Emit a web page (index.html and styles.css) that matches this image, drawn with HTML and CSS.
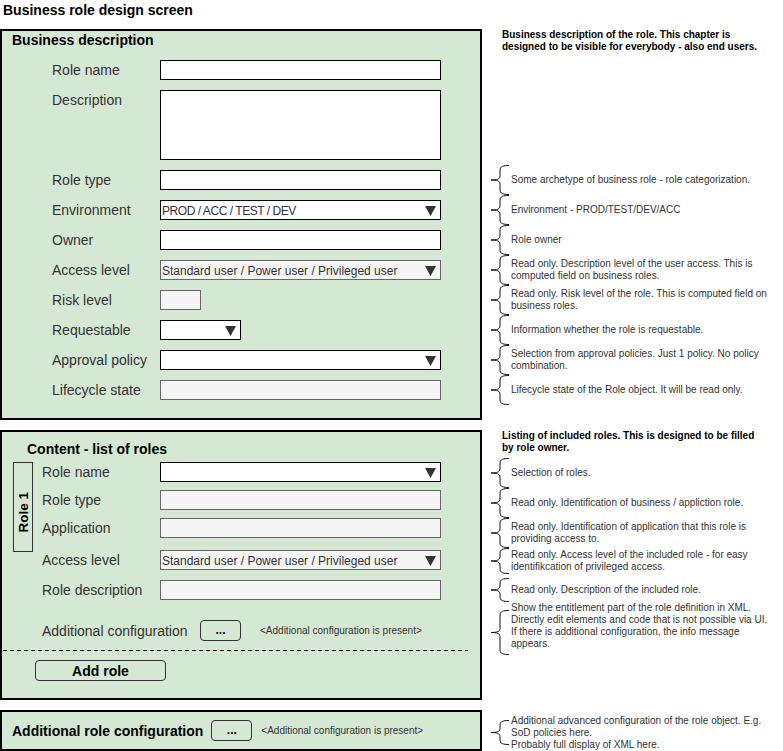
FILE: index.html
```html
<!DOCTYPE html>
<html lang="en">
<head>
<meta charset="utf-8">
<title>Business role design screen</title>
<link rel="stylesheet" href="styles.css">
</head>
<body>
<div class="page">
  <h1 class="title">Business role design screen</h1>

  <section class="panel panel-business">
    <h2 class="panel-title">Business description</h2>
    <div class="form">
      <div class="row"><span class="label">Role name</span><span class="field"></span></div>
      <div class="row"><span class="label">Description</span><span class="field field-tall"></span></div>
      <div class="row"><span class="label">Role type</span><span class="field"></span></div>
      <div class="row"><span class="label">Environment</span><span class="field select"><span class="value value-caps">PROD / ACC / TEST / DEV</span><svg class="caret" width="11" height="10" viewBox="0 0 11 10"><path d="M0 0H11L5.5 10Z"/></svg></span></div>
      <div class="row"><span class="label">Owner</span><span class="field"></span></div>
      <div class="row"><span class="label">Access level</span><span class="field select readonly"><span class="value">Standard user / Power user / Privileged user</span><svg class="caret" width="11" height="10" viewBox="0 0 11 10"><path d="M0 0H11L5.5 10Z"/></svg></span></div>
      <div class="row"><span class="label">Risk level</span><span class="field readonly field-xs"></span></div>
      <div class="row"><span class="label">Requestable</span><span class="field select field-sm"><svg class="caret" width="11" height="10" viewBox="0 0 11 10"><path d="M0 0H11L5.5 10Z"/></svg></span></div>
      <div class="row"><span class="label">Approval policy</span><span class="field select"><svg class="caret" width="11" height="10" viewBox="0 0 11 10"><path d="M0 0H11L5.5 10Z"/></svg></span></div>
      <div class="row"><span class="label">Lifecycle state</span><span class="field readonly"></span></div>
    </div>
  </section>

  <aside class="notes notes-business">
    <p class="note-lead">Business description of the role. This chapter is<br>designed to be visible for everybody - also end users.</p>
    <ul class="braces">
      <li class="brace-item h30"><svg class="brace" width="20" height="30" viewBox="0 0 20 30"><path d="M19 .5C13 .5 10 1.5 10 5V11C10 14 7 15 1 15C7 15 10 16 10 19V25C10 28.5 13 29.5 19 29.5"/></svg><span class="note">Some archetype of business role - role categorization.</span></li>
      <li class="brace-item h30"><svg class="brace" width="20" height="30" viewBox="0 0 20 30"><path d="M19 .5C13 .5 10 1.5 10 5V11C10 14 7 15 1 15C7 15 10 16 10 19V25C10 28.5 13 29.5 19 29.5"/></svg><span class="note">Environment - PROD/TEST/DEV/ACC</span></li>
      <li class="brace-item h30"><svg class="brace" width="20" height="30" viewBox="0 0 20 30"><path d="M19 .5C13 .5 10 1.5 10 5V11C10 14 7 15 1 15C7 15 10 16 10 19V25C10 28.5 13 29.5 19 29.5"/></svg><span class="note">Role owner</span></li>
      <li class="brace-item h30"><svg class="brace" width="20" height="30" viewBox="0 0 20 30"><path d="M19 .5C13 .5 10 1.5 10 5V11C10 14 7 15 1 15C7 15 10 16 10 19V25C10 28.5 13 29.5 19 29.5"/></svg><span class="note">Read only. Description level of the user access. This is<br>computed field on business roles.</span></li>
      <li class="brace-item h30"><svg class="brace" width="20" height="30" viewBox="0 0 20 30"><path d="M19 .5C13 .5 10 1.5 10 5V11C10 14 7 15 1 15C7 15 10 16 10 19V25C10 28.5 13 29.5 19 29.5"/></svg><span class="note">Read only. Risk level of the role. This is computed field on<br>business roles.</span></li>
      <li class="brace-item h30"><svg class="brace" width="20" height="30" viewBox="0 0 20 30"><path d="M19 .5C13 .5 10 1.5 10 5V11C10 14 7 15 1 15C7 15 10 16 10 19V25C10 28.5 13 29.5 19 29.5"/></svg><span class="note">Information whether the role is requestable.</span></li>
      <li class="brace-item h30"><svg class="brace" width="20" height="30" viewBox="0 0 20 30"><path d="M19 .5C13 .5 10 1.5 10 5V11C10 14 7 15 1 15C7 15 10 16 10 19V25C10 28.5 13 29.5 19 29.5"/></svg><span class="note">Selection from approval policies. Just 1 policy. No policy<br>combination.</span></li>
      <li class="brace-item h30"><svg class="brace" width="20" height="30" viewBox="0 0 20 30"><path d="M19 .5C13 .5 10 1.5 10 5V11C10 14 7 15 1 15C7 15 10 16 10 19V25C10 28.5 13 29.5 19 29.5"/></svg><span class="note">Lifecycle state of the Role object. It will be read only.</span></li>
    </ul>
  </aside>

  <section class="panel panel-content">
    <h2 class="panel-title">Content - list of roles</h2>
    <div class="role">
      <div class="role-tag"><span>Role 1</span></div>
      <div class="role-fields">
        <div class="row"><span class="label">Role name</span><span class="field select"><svg class="caret" width="11" height="10" viewBox="0 0 11 10"><path d="M0 0H11L5.5 10Z"/></svg></span></div>
        <div class="row gap-8"><span class="label">Role type</span><span class="field readonly"></span></div>
        <div class="row gap-8"><span class="label">Application</span><span class="field readonly"></span></div>
        <div class="row gap-12"><span class="label">Access level</span><span class="field select readonly"><span class="value">Standard user / Power user / Privileged user</span><svg class="caret" width="11" height="10" viewBox="0 0 11 10"><path d="M0 0H11L5.5 10Z"/></svg></span></div>
        <div class="row gap-10"><span class="label">Role description</span><span class="field readonly"></span></div>
        <div class="row row-config gap-20"><span class="label label-wide">Additional configuration</span><button class="btn btn-more" type="button">...</button><span class="hint hint-config">&lt;Additional configuration is present&gt;</span></div>
      </div>
    </div>
    <div class="divider"></div>
    <button class="btn btn-add" type="button">Add role</button>
  </section>

  <aside class="notes notes-content">
    <p class="note-lead">Listing of included roles. This is designed to be filled<br>by role owner.</p>
    <ul class="braces braces-content">
      <li class="brace-item h30"><svg class="brace" width="20" height="30" viewBox="0 0 20 30"><path d="M19 .5C13 .5 10 1.5 10 5V11C10 14 7 15 1 15C7 15 10 16 10 19V25C10 28.5 13 29.5 19 29.5"/></svg><span class="note">Selection of roles.</span></li>
      <li class="brace-item h30"><svg class="brace" width="20" height="30" viewBox="0 0 20 30"><path d="M19 .5C13 .5 10 1.5 10 5V11C10 14 7 15 1 15C7 15 10 16 10 19V25C10 28.5 13 29.5 19 29.5"/></svg><span class="note">Read only. Identification of business / appliction role.</span></li>
      <li class="brace-item h30"><svg class="brace" width="20" height="30" viewBox="0 0 20 30"><path d="M19 .5C13 .5 10 1.5 10 5V11C10 14 7 15 1 15C7 15 10 16 10 19V25C10 28.5 13 29.5 19 29.5"/></svg><span class="note">Read only. Identification of application that this role is<br>providing access to.</span></li>
      <li class="brace-item h26"><svg class="brace" width="20" height="26" viewBox="0 0 20 26"><path d="M19 .5C13 .5 10 1.5 10 5V9C10 12 7 13 1 13C7 13 10 14 10 17V21C10 24.5 13 25.5 19 25.5"/></svg><span class="note">Read only. Access level of the included role - for easy<br>identifikcation of privileged access.</span></li>
      <li class="brace-item h24 gap-4"><svg class="brace" width="20" height="24" viewBox="0 0 20 24"><path d="M19 .5C13 .5 10 1.5 10 5V8C10 11 7 12 1 12C7 12 10 13 10 16V19C10 22.5 13 23.5 19 23.5"/></svg><span class="note">Read only. Description of the included role.</span></li>
      <li class="brace-item brace-top h53"><svg class="brace brace-xml" width="20" height="45" viewBox="0 0 20 45"><path d="M19 .5C13 .5 10 1.5 10 5V18.5C10 21.5 7 22.5 1 22.5C7 22.5 10 23.5 10 26.5V40C10 43.5 13 44.5 19 44.5"/></svg><span class="note">Show the entitlement part of the role definition in XML.<br>Directly edit elements and code that is not possible via UI.<br>If there is additional configuration, the info message<br>appears.</span></li>
    </ul>
  </aside>

  <section class="panel panel-extra">
    <h2 class="panel-title">Additional role configuration</h2>
    <button class="btn btn-more" type="button">...</button>
    <span class="hint">&lt;Additional configuration is present&gt;</span>
  </section>

  <aside class="notes notes-extra">
    <ul class="braces">
      <li class="brace-item brace-top gap-5"><svg class="brace brace-extra" width="20" height="25" viewBox="0 0 20 25"><path d="M19 .5C13 .5 10 1.5 10 5V8.5C10 11.5 7 12.5 1 12.5C7 12.5 10 13.5 10 16.5V20C10 23.5 13 24.5 19 24.5"/></svg><span class="note">Additional advanced configuration of the role object. E.g.<br>SoD policies here.<br>Probably full display of XML here.</span></li>
    </ul>
  </aside>
</div>
</body>
</html>
```

FILE: styles.css
```css
body {
  margin: 0;
  font-family: "Liberation Sans", Arial, sans-serif;
  color: #333;
  background: #fff;
}

.page {
  display: grid;
  grid-template-columns: 482px 1fr;
  grid-template-rows: 19px auto auto auto;
  row-gap: 10px;
}

.title {
  grid-column: 1 / -1;
  margin: 0;
  padding-left: 3px;
  height: 19px;
  font-size: 14px;
  line-height: 20px;
  font-weight: bold;
  color: #000;
}

/* panels */
.panel {
  box-sizing: border-box;
  align-self: start;
  border: 2px solid #000;
  background: #d5e8d4;
}

.panel-title {
  margin: 0;
  font-size: 14px;
  font-weight: bold;
  line-height: 18px;
  color: #000;
  white-space: nowrap;
}

.panel-business {
  padding-bottom: 18px;
}

.panel-business .panel-title {
  padding-left: 10px;
  margin-bottom: 11px;
}

.form {
  display: flex;
  flex-direction: column;
  gap: 10px;
  padding-left: 50px;
}

.row {
  display: flex;
  align-items: flex-start;
}

.label {
  flex: none;
  width: 108px;
  font-size: 14px;
  line-height: 20px;
  color: #333;
  white-space: nowrap;
}

.field {
  box-sizing: border-box;
  flex: none;
  width: 281px;
  height: 20px;
  border: 1px solid #000;
  background: #fff;
  font-size: 12px;
  color: #333;
}

.field.readonly {
  background: #f5f5f5;
  border-color: #666;
}

.field-tall {
  height: 70px;
}

.field-xs {
  width: 41px;
}

.field-sm {
  width: 81px;
}

.select {
  display: flex;
  align-items: center;
  padding: 1px 4px 0 1px;
}

.value {
  white-space: nowrap;
  line-height: 16px;
}

.value-caps {
  letter-spacing: -0.45px;
}

.caret {
  flex: none;
  margin-left: auto;
}

.caret path {
  fill: #333;
}

/* content panel */
.panel-content {
  padding-top: 8px;
  padding-bottom: 17px;
}

.panel-content .panel-title {
  padding-left: 25px;
}

.role {
  display: flex;
  align-items: flex-start;
  margin-top: 4px;
  padding-left: 11px;
}

.role-tag {
  box-sizing: border-box;
  flex: none;
  width: 20px;
  height: 90px;
  margin-right: 9px;
  padding-top: 10px;
  border: 1px solid #333;
  display: flex;
  align-items: center;
  justify-content: center;
}

.role-tag span {
  writing-mode: vertical-rl;
  transform: rotate(180deg);
  font-size: 13.5px;
  font-weight: bold;
  color: #000;
  white-space: nowrap;
}

.role-fields {
  display: flex;
  flex-direction: column;
}

.role-fields .label {
  width: 118px;
}

.role-fields .label-wide {
  width: 158px;
}

.row-config {
  align-items: center;
}

.gap-4 { margin-top: 4px; }
.gap-5 { margin-top: 5px; }
.gap-8 { margin-top: 8px; }
.gap-10 { margin-top: 10px; }
.gap-12 { margin-top: 12px; }
.gap-20 { margin-top: 20px; }

.divider {
  height: 1px;
  margin: 9px 12px 0 1px;
  background: repeating-linear-gradient(to right, #000 0 4px, transparent 4px 7px);
}

.btn {
  box-sizing: border-box;
  display: flex;
  align-items: center;
  justify-content: center;
  height: 21px;
  padding: 0;
  border: 1px solid #333;
  border-radius: 4px;
  background: transparent;
  font-family: "Liberation Sans", Arial, sans-serif;
  font-size: 14px;
  font-weight: bold;
  color: #000;
}

.btn-add {
  width: 131px;
  margin: 9px 0 0 33px;
}

.btn-more {
  flex: none;
  width: 41px;
  font-size: 12px;
  padding-bottom: 2px;
}

.hint {
  font-size: 10px;
  color: #333;
  white-space: nowrap;
  margin-left: 9px;
}

.hint-config {
  margin-left: 19px;
}

/* extra panel */
.panel-extra {
  display: flex;
  align-items: center;
  height: 41px;
  padding-left: 10px;
}

.panel-extra .panel-title {
  line-height: 20px;
}

.panel-extra .btn-more {
  margin-left: 8px;
}

/* annotations */
.notes {
  align-self: start;
  font-size: 10px;
  line-height: 12px;
  color: #333;
}

.note-lead {
  margin: 0;
  padding-left: 20px;
  font-weight: bold;
  color: #000;
  white-space: nowrap;
}

.braces {
  list-style: none;
  margin: 0;
  padding: 0 0 0 8px;
}

.notes-business .braces {
  margin-top: 112px;
}

.braces-content {
  margin-top: 4px;
}

.brace-item {
  display: flex;
  align-items: center;
}

.brace-top {
  align-items: flex-start;
}

.brace {
  flex: none;
  display: block;
}

.brace path {
  fill: none;
  stroke: #111;
  stroke-width: 1;
}

.brace-xml {
  margin-top: 8px;
}

.brace-extra {
  margin-top: 5px;
}

.note {
  padding-left: 1px;
  white-space: nowrap;
}

.h24 { height: 24px; }
.h26 { height: 26px; }
.h30 { height: 30px; }
.h53 { height: 53px; }
```
